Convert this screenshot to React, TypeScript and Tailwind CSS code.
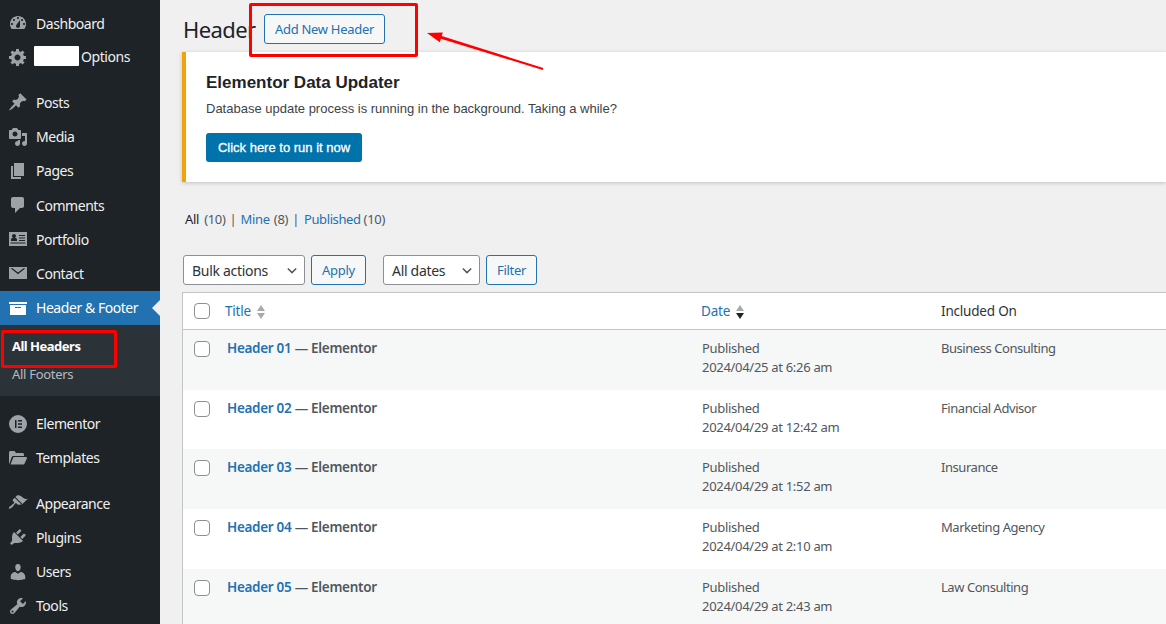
import type { ReactNode } from 'react';

const icons: Record<string, string> = {
  dashboard:
    'M3.76 16h12.48c1.1-1.37 1.76-3.11 1.76-5 0-4.42-3.58-8-8-8s-8 3.58-8 8c0 1.89.66 3.63 1.76 5zM10 4c.55 0 1 .45 1 1s-.45 1-1 1-1-.45-1-1 .45-1 1-1zM6 6c.55 0 1 .45 1 1s-.45 1-1 1-1-.45-1-1 .45-1 1-1zm8 0c.55 0 1 .45 1 1s-.45 1-1 1-1-.45-1-1 .45-1 1-1zm-5.37 5.55L12 7v6c0 1.1-.9 2-2 2s-2-.9-2-2c0-.57.24-1.08.63-1.45zM4 10c.55 0 1 .45 1 1s-.45 1-1 1-1-.45-1-1 .45-1 1-1zm12 0c.55 0 1 .45 1 1s-.45 1-1 1-1-.45-1-1 .45-1 1-1z',
  gear:
    'M18 12h-2.18c-.17.7-.44 1.35-.81 1.93l1.54 1.54-2.1 2.1-1.54-1.54c-.58.36-1.23.63-1.91.79V19H8v-2.18c-.68-.16-1.33-.43-1.91-.79l-1.54 1.54-2.12-2.12 1.54-1.54c-.36-.58-.63-1.23-.79-1.91H1V9.03h2.17c.16-.7.44-1.35.8-1.94L2.43 5.55l2.1-2.1 1.54 1.54c.58-.37 1.24-.64 1.93-.81V2h3v2.18c.68.16 1.33.43 1.91.79l1.54-1.54 2.12 2.12-1.54 1.54c.36.59.64 1.24.8 1.94H18V12zm-8.5 1.5c1.66 0 3-1.34 3-3s-1.34-3-3-3-3 1.34-3 3 1.34 3 3 3z',
  pin:
    'M10.44 3.02l1.82-1.82 6.36 6.35-1.83 1.82c-1.05-.68-2.48-.57-3.41.36l-.75.75c-.92.93-1.04 2.35-.35 3.41l-1.83 1.82-2.41-2.41-2.8 2.79c-.42.42-3.38 2.71-3.8 2.29s1.86-3.39 2.28-3.81l2.79-2.79L4.1 9.36l1.83-1.82c1.05.69 2.48.57 3.4-.36l.75-.75c.93-.92 1.05-2.35.36-3.41z',
  media:
    'M13 11V4c0-.55-.45-1-1-1h-1.67L9 1H5L3.67 3H2c-.55 0-1 .45-1 1v7c0 .55.45 1 1 1h10c.55 0 1-.45 1-1zM7 4.5c1.38 0 2.5 1.12 2.5 2.5S8.38 9.5 7 9.5 4.5 8.38 4.5 7 5.62 4.5 7 4.5zM14 6h5v10.5c0 1.38-1.12 2.5-2.5 2.5S14 17.88 14 16.5s1.12-2.5 2.5-2.5c.17 0 .34.02.5.05V9h-3V6zm-4 8.05V13h2v3.5c0 1.38-1.12 2.5-2.5 2.5S7 17.88 7 16.5 8.12 14 9.5 14c.17 0 .34.02.5.05z',
  page: 'M6 15V2h10v13H6zm-1 1h8v2H3V5h2v11z',
  comments:
    'M5 2h9c1.1 0 2 .9 2 2v7c0 1.1-.9 2-2 2h-2l-5 5v-5H5c-1.1 0-2-.9-2-2V4c0-1.1.9-2 2-2z',
  portfolio:
    'M1 3h18v14H1V3zm1.5 10.5v1h15v-1h-15zM3 12h6V10.5c0-1-1.2-1.4-2-1.7.6-.4 1-1 1-1.8C8 6 7.2 5 6 5S4 6 4 7c0 .8.4 1.4 1 1.8-.8.3-2 .7-2 1.7V12zm8-6v1h6V6h-6zm0 2.5v1h6v-1h-6zm0 2.5v1h6v-1h-6z',
  mail:
    'M1 4h18v12H1V4zm1.6 1.2L10 11.2l7.4-6h-1.9L10 9.6 4.5 5.2H2.6z',
  archive: 'M19 4v2H1V4h18zM2 7h16v10H2V7zm11 3V9H7v1h6z',
  elementor:
    'M10 1a9 9 0 1 0 0 18 9 9 0 0 0 0-18zM7 6h1.5v8H7V6zm3 0h4v1.5h-4V6zm0 3.2h4v1.5h-4V9.2zm0 3.3h4V14h-4v-1.5z',
  folder:
    'M1 16V4.5C1 3.7 1.7 3 2.5 3h4L8 5h6.5c.8 0 1.5.7 1.5 1.5V8H5.5c-.8 0-1.4.4-1.7 1.1L1.4 15.600zM2.500 16.500l2.600-6.600c.2-.5.500-.9 1.100-.9H18c.7 0 1.200.7.900 1.400l-2.300 5.200c-.2.500-.7.900-1.300.900H2.500z',
  brush:
    'M14.48 11.06L7.41 3.99l1.5-1.5c.5-.56 2.3-.47 3.51.32 1.21.8 1.43 1.28 2.91 2.1 1.18.64 2.45 1.26 4.45.85zm-.71.71L6.7 4.7 4.93 6.47c-.39.39-.39 1.02 0 1.41l1.06 1.06c.39.39.39 1.03 0 1.42-.6.6-1.43 1.11-2.21 1.69-.35.26-.7.53-1.01.84C1.43 13.23.4 14.75 1.1 15.45c.7.7 2.21-.33 3.55-1.67.31-.31.58-.66.84-1.01.58-.78 1.09-1.61 1.69-2.21.39-.39 1.02-.39 1.41 0l1.06 1.06c.39.39 1.02.39 1.41 0z',
  plugin:
    'M13.11 4.36L9.87 7.6 8 5.73l3.24-3.24c.35-.34 1.05-.2 1.56.32.52.51.66 1.21.31 1.55zm-8 1.77l.91-1.12 9.01 9.01-1.19.84c-.71.71-2.63 1.16-3.82 1.16H6.14L4.9 17.26c-.59.59-1.54.59-2.12 0-.59-.58-.59-1.53 0-2.12l1.24-1.24v-3.88c0-1.13.4-3.19 1.09-3.89zm7.26 3.97l3.24-3.24c.34-.35 1.04-.21 1.55.31.52.51.66 1.21.31 1.55l-3.24 3.25z',
  users:
    'M10 9.25c-2.27 0-2.73-3.44-2.73-3.44C7 4.02 7.82 2 9.97 2c2.16 0 2.98 2.02 2.71 3.81 0 0-.41 3.44-2.68 3.44zm0 2.57L12.72 10c2.39 0 4.52 2.33 4.52 4.53v2.49s-3.65 1.13-7.24 1.13c-3.65 0-7.24-1.13-7.24-1.13v-2.49c0-2.25 1.94-4.48 4.47-4.48z',
  tools:
    'M16.68 9.77c-1.34 1.34-3.3 1.67-4.95.99l-5.41 6.52c-.99.99-2.59.99-3.58 0s-.99-2.59 0-3.57l6.52-5.42c-.68-1.65-.35-3.61.99-4.95 1.28-1.28 3.12-1.62 4.72-1.06l-2.89 2.89 2.82 2.82 2.86-2.87c.53 1.58.18 3.39-1.08 4.65zM3.81 16.21c.4.39 1.04.39 1.43 0 .4-.4.4-1.04 0-1.43-.39-.4-1.03-.4-1.43 0-.39.39-.39 1.03 0 1.43z',
};

function MenuIcon({ name, white }: { name: string; white?: boolean }) {
  return (
    <svg
      viewBox="0 0 20 20"
      className={`w-5 h-5 shrink-0 ${white ? 'text-white' : 'text-[#9ca2a7]'}`}
      fill="currentColor"
      fillRule="evenodd"
    >
      <path d={icons[name]} />
    </svg>
  );
}

function MenuItem({ icon, children, active }: { icon: string; children: ReactNode; active?: boolean }) {
  return (
    <div
      className={`relative flex items-center h-[34.2px] pl-2 text-[14px] tracking-[-0.45px] ${
        active ? 'bg-[#2271b1] text-white' : 'text-[#f0f0f1]'
      }`}
    >
      <MenuIcon name={icon} white={active} />
      <span className="ml-2">{children}</span>
      {active && (
        <span className="absolute right-0 top-[9px] border-y-[8px] border-r-[8px] border-y-transparent border-r-[#f0f0f1]" />
      )}
    </div>
  );
}

function Sidebar() {
  return (
    <aside className="w-40 shrink-0 bg-[#1d2327] pt-1.5 h-[624px] overflow-hidden">
      <MenuItem icon="dashboard">Dashboard</MenuItem>
      <MenuItem icon="gear">
        <span className="inline-flex items-center -ml-0.5 gap-0.5">
          <span className="w-[45px] h-5 bg-white rounded-[1px]" />
          <span className="pt-[2px]">Options</span>
        </span>
      </MenuItem>
      <div className="h-[11px]" />
      <MenuItem icon="pin">Posts</MenuItem>
      <MenuItem icon="media">Media</MenuItem>
      <MenuItem icon="page">Pages</MenuItem>
      <MenuItem icon="comments">Comments</MenuItem>
      <MenuItem icon="portfolio">Portfolio</MenuItem>
      <MenuItem icon="mail">Contact</MenuItem>
      <MenuItem icon="archive" active>
        Header &amp; Footer
      </MenuItem>
      <div className="bg-[#2c3338] h-[71px] pt-2 pl-3 text-[13px]">
        <div className="h-7 flex items-center font-bold text-white tracking-[-0.5px]">All Headers</div>
        <div className="h-7 flex items-center text-[#f0f6fc]/70 tracking-[-0.3px]">All Footers</div>
      </div>
      <div className="h-[11px]" />
      <MenuItem icon="elementor">Elementor</MenuItem>
      <MenuItem icon="folder">Templates</MenuItem>
      <div className="h-[11px]" />
      <MenuItem icon="brush">Appearance</MenuItem>
      <MenuItem icon="plugin">Plugins</MenuItem>
      <MenuItem icon="users">Users</MenuItem>
      <MenuItem icon="tools">Tools</MenuItem>
    </aside>
  );
}

function Chevron() {
  return (
    <svg viewBox="0 0 12 8" className="w-[10px] h-[7px]" fill="none" stroke="#50575e" strokeWidth="1.8">
      <path d="M1 1.500l5 5 5-5" />
    </svg>
  );
}

function Select({ label, className }: { label: string; className: string }) {
  return (
    <div
      className={`h-[30px] flex items-center justify-between pl-2 pr-[7px] bg-white border border-[#8c8f94] rounded-[3px] text-[14px] text-[#2c3338] ${className}`}
    >
      <span>{label}</span>
      <Chevron />
    </div>
  );
}

function OutlineButton({ children, className }: { children: ReactNode; className: string }) {
  return (
    <button className={`h-[30px] pt-[1px] flex items-center justify-center bg-[#f6f7f7] border border-[#2271b1] rounded-[3px] text-[13px] text-[#2271b1] ${className}`}>
      {children}
    </button>
  );
}

function Checkbox() {
  return <span className="block w-4 h-4 bg-white border border-[#8c8f94] rounded-[4px]" />;
}

function SortArrows({ dark }: { dark?: boolean }) {
  return (
    <span className="ml-[6px] flex flex-col gap-[2px]">
      <span className="border-x-[4.5px] border-b-[6px] border-x-transparent border-b-[#a7aaad]" />
      <span className={`border-x-[4.5px] border-t-[6px] border-x-transparent ${dark ? 'border-t-[#1d2327]' : 'border-t-[#a7aaad]'}`} />
    </span>
  );
}

const rows = [
  { title: 'Header 01', date: '2024/04/25 at 6:26 am', on: 'Business Consulting' },
  { title: 'Header 02', date: '2024/04/29 at 12:42 am', on: 'Financial Advisor' },
  { title: 'Header 03', date: '2024/04/29 at 1:52 am', on: 'Insurance' },
  { title: 'Header 04', date: '2024/04/29 at 2:10 am', on: 'Marketing Agency' },
  { title: 'Header 05', date: '2024/04/29 at 2:43 am', on: 'Law Consulting' },
];

function Table() {
  return (
    <div className="mt-[7px] border-l border-t border-[#c3c4c7] bg-white text-[13px]">
      <div className="flex items-center h-[37px] border-b border-[#c3c4c7] bg-white text-[13.500px] tracking-[-0.2px]">
        <div className="w-[42px] pl-[11px] shrink-0">
          <Checkbox />
        </div>
        <div className="w-[476px] shrink-0 flex items-center text-[#2271b1] pt-[1px]">
          Title
          <SortArrows />
        </div>
        <div className="w-[240px] shrink-0 flex items-center text-[#2271b1] pt-[1px]">
          Date
          <SortArrows dark />
        </div>
        <div className="text-[#2c3338] pt-[1px]">Included On</div>
      </div>
      {rows.map((row, i) => (
        <div key={row.title} className={`flex h-[59.7px] pt-[9px] ${i % 2 === 0 ? 'bg-[#f6f7f7]' : 'bg-white'}`}>
          <div className="w-[44px] pl-[11px] pt-[2px] shrink-0">
            <Checkbox />
          </div>
          <div className="w-[475px] shrink-0 text-[13.500px] font-semibold text-[#50575e] leading-[18px]">
            <span className="text-[#2271b1]">{row.title}</span> — Elementor
          </div>
          <div className="w-[239px] shrink-0 text-[#50575e] leading-[19px]">
            Published
            <br />
            {row.date}
          </div>
          <div className="text-[#50575e] leading-[19.500px] tracking-[-0.45px]">{row.on}</div>
        </div>
      ))}
    </div>
  );
}

export default function App() {
  return (
    <div className="relative flex w-[1166px] h-[624px] overflow-hidden bg-[#f0f0f1] font-['Noto_Sans',sans-serif] tracking-[-0.3px]">
      <Sidebar />
      <main className="flex-1 min-w-0 pl-[22px]">
        <div className="flex items-center h-[30px] mt-[14px]">
          <h1 className="ml-[1px] text-[22px] text-[#1d2327] tracking-[-0.6px]">Header</h1>
          <OutlineButton className="ml-auto mr-[781px] w-[121px]">Add New Header</OutlineButton>
        </div>
        <div className="mt-2 h-[130px] border-l-4 border-[#f0a30a] bg-white shadow-[0_1px_4px_rgba(0,0,0,0.2)] pl-5 pt-5 font-['Liberation_Sans',sans-serif] tracking-normal">
          <h2 className="text-[17px] leading-[22px] font-bold text-[#1d2327]">Elementor Data Updater</h2>
          <p className="mt-[5px] text-[13px] leading-[20px] text-[#3c434a]">
            Database update process is running in the background. Taking a while?
          </p>
          <button className="mt-[14px] h-[29px] w-[156px] rounded-[3px] bg-[#0073aa] text-[13px] text-white [-webkit-text-stroke:0.3px_white]">
            Click here to run it now
          </button>
        </div>
        <div className="mt-[29px] ml-[3px] h-[18px] flex items-center text-[13px] text-[#50575e]">
          <span className="text-[#1d2327]">All</span>
          <span className="ml-[5px]">(10)</span>
          <span className="mx-1">|</span>
          <span className="text-[#2271b1]">Mine</span>
          <span className="ml-1">(8)</span>
          <span className="mx-1">|</span>
          <span className="ml-[1px] text-[#2271b1] tracking-[-0.4px]">Published</span>
          <span className="ml-[3px]">(10)</span>
        </div>
        <div className="mt-[26px] ml-[1px] flex">
          <Select label="Bulk actions" className="w-[122px]" />
          <OutlineButton className="ml-[6px] w-[55px]">Apply</OutlineButton>
          <Select label="All dates" className="ml-[17px] w-[97px]" />
          <OutlineButton className="ml-[6px] w-[51px]">Filter</OutlineButton>
        </div>
        <Table />
      </main>

      {/* annotations drawn on top of the screenshot */}
      <div className="absolute left-[1px] top-[330px] w-[116px] h-[38px] border-[3px] border-[#fe0000] rounded-[2px]" />
      <div className="absolute left-[249px] top-[3px] w-[169px] h-[54px] border-[3px] border-[#fe0000] rounded-[2px]" />
      <svg className="absolute left-[420px] top-[25px] w-[130px] h-[50px]" viewBox="0 0 130 50" fill="#fe0000">
        <path d="M7 8L22.800 7.600 21.700 11 123.300 43 122.700 45 20.900 13.800 19.800 17.200z" />
      </svg>
    </div>
  );
}
